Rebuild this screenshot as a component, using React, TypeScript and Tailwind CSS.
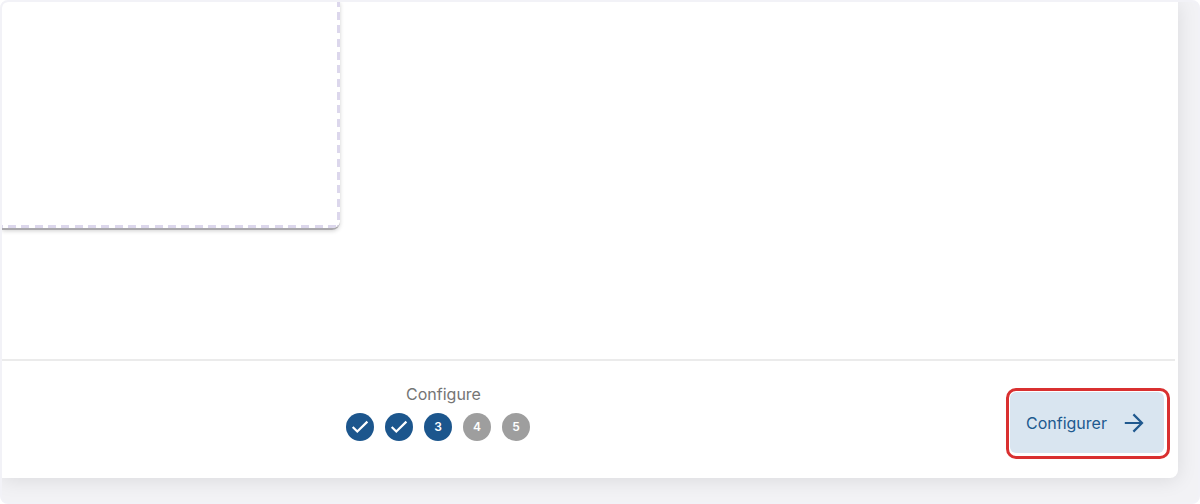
type StepState = "done" | "current" | "upcoming";

const steps: { id: number; state: StepState }[] = [
  { id: 1, state: "done" },
  { id: 2, state: "done" },
  { id: 3, state: "current" },
  { id: 4, state: "upcoming" },
  { id: 5, state: "upcoming" },
];

function CheckIcon() {
  return (
    <svg className="w-5 h-5" viewBox="0 0 20 20" fill="none" stroke="currentColor" strokeWidth="2.2" aria-hidden="true">
      <path d="M2.7 10 7.3 14.5 17.4 4.6" />
    </svg>
  );
}

function ArrowIcon() {
  return (
    <svg className="w-5 h-5" viewBox="0 0 20 20" fill="none" stroke="currentColor" strokeWidth="2.2" aria-hidden="true">
      <path d="M0.8 10H18M9.4 1.4 18 10 9.4 18.6" />
    </svg>
  );
}

function Stepper() {
  return (
    <div className="flex flex-col gap-[7px]">
      <div className="pl-[11px] text-center text-base leading-6 text-[#757575]">Configure</div>
      <ol className="flex gap-[11px]">
        {steps.map((s) => (
          <li
            key={s.id}
            aria-current={s.state === "current" ? "step" : undefined}
            className={`flex w-7 h-7 items-center justify-center rounded-full text-xs font-semibold text-white ${s.state === "upcoming" ? "bg-[#9e9e9e]" : "bg-[#1c568d]"}`}
          >
            {s.state === "done" ? <CheckIcon /> : s.id}
          </li>
        ))}
      </ol>
    </div>
  );
}

export default function App() {
  return (
    <div className="min-h-screen flex bg-white font-['Inter',sans-serif]">
      <div className="flex flex-1 rounded-lg border-2 border-[#f2f2f7] bg-[#f2f2f5] pr-5 pb-6 overflow-hidden">
        <main className="flex flex-1 flex-col rounded-br-lg bg-white shadow-[0_2px_20px_rgba(0,0,0,0.1)]">
          {/* Drop area */}
          <div className="flex-1">
            <section className="relative w-[338px] h-[228px] rounded-br-lg overflow-hidden border-b-2 border-[#a9a8ac] shadow-[0_1px_4px_rgba(0,0,0,0.18)]">
              <div className="absolute right-0 inset-y-0 w-[3px] bg-[repeating-linear-gradient(to_bottom,#dcd7ec_0_5px,transparent_5px_10px,#dcd7ec_10px_18px,transparent_18px_23px,#dcd7ec_23px_31px,transparent_31px_37px,#dcd7ec_37px_40px)]" />
              <div className="absolute bottom-0 inset-x-0 h-[3px] bg-[repeating-linear-gradient(to_right,#dcd7ec_0_1px,transparent_1px_6px,#dcd7ec_6px_14px,transparent_14px_19px,#dcd7ec_19px_27px,transparent_27px_33px,#dcd7ec_33px_40px)]" />
            </section>
          </div>

          {/* Footer */}
          <footer className="mr-[3px] flex items-start justify-between border-t-2 border-[#ebebeb] pt-[21px] pb-[19px]">
            <div className="ml-[344px]">
              <Stepper />
            </div>
            <div className="mt-[6px] mr-[5px] rounded-[10px] border-3 border-[#d93030] pt-px pl-px pr-[3px] pb-[3px]">
              <button type="button" className="flex w-[154px] h-[61px] items-center justify-between rounded-md bg-[#d9e5f0] pl-4 pr-5 text-base text-[#20598f]">
                Configurer
                <ArrowIcon />
              </button>
            </div>
          </footer>
        </main>
      </div>
    </div>
  );
}
